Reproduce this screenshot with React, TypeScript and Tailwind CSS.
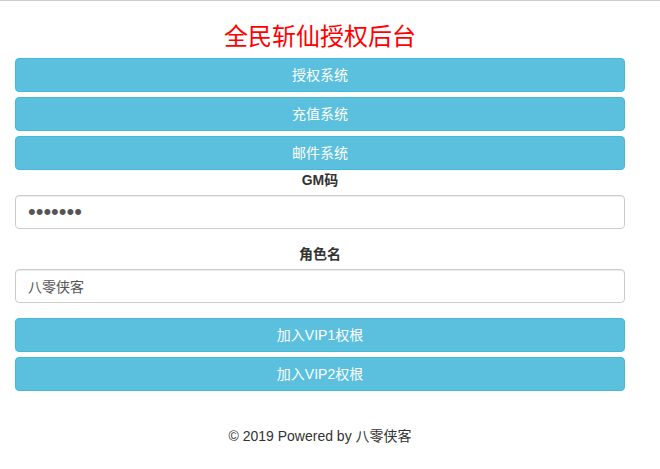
import React from "react";

const font = { fontFamily: '"Liberation Sans", "Noto Sans CJK SC", sans-serif' };

function Btn({ children }: { children: React.ReactNode }) {
  return (
    <button
      type="button"
      className="block w-full h-[34px] rounded-[4px] border border-[#46b8da] bg-[#5bc0de] text-white text-[14px] leading-[20px] text-center"
    >
      {children}
    </button>
  );
}

export default function App() {
  return (
    <div
      className="w-[660px] min-h-[469px] bg-white border-t border-[#cccccc] text-[#333333] text-[14px] leading-[20px]"
      style={font}
    >
      <div className="w-[640px] px-[15px]">
        <div className="mt-[23px] mb-[8px] h-[26px] text-center text-[24px] leading-[26px] text-[#ff0000]">
          全民斩仙授权后台
        </div>
        <div className="flex flex-col gap-[5px]">
          <Btn>授权系统</Btn>
          <Btn>充值系统</Btn>
          <Btn>邮件系统</Btn>
        </div>
        <div className="mb-[15px]">
          <div className="text-center font-bold h-[20px] mb-[5px]">GM码</div>
          <input
            type="password"
            defaultValue="1234567"
            className="block w-full h-[34px] rounded-[4px] border border-[#cccccc] px-[12px] py-0 text-[22px] leading-[32px] text-[#555555] shadow-[inset_0_1px_1px_rgba(0,0,0,0.075)] outline-none"
            style={font}
          />
        </div>
        <div className="mb-[15px]">
          <div className="text-center font-bold h-[20px] mb-[5px]">角色名</div>
          <input
            type="text"
            defaultValue="八零侠客"
            className="block w-full h-[34px] rounded-[4px] border border-[#cccccc] px-[12px] py-[6px] text-[14px] text-[#555555] shadow-[inset_0_1px_1px_rgba(0,0,0,0.075)] outline-none"
            style={font}
          />
        </div>
        <div className="flex flex-col gap-[5px]">
          <Btn>加入VIP1权根</Btn>
          <Btn>加入VIP2权根</Btn>
        </div>
        <div className="mt-[35px] text-center">© 2019 Powered by 八零侠客</div>
      </div>
    </div>
  );
}
